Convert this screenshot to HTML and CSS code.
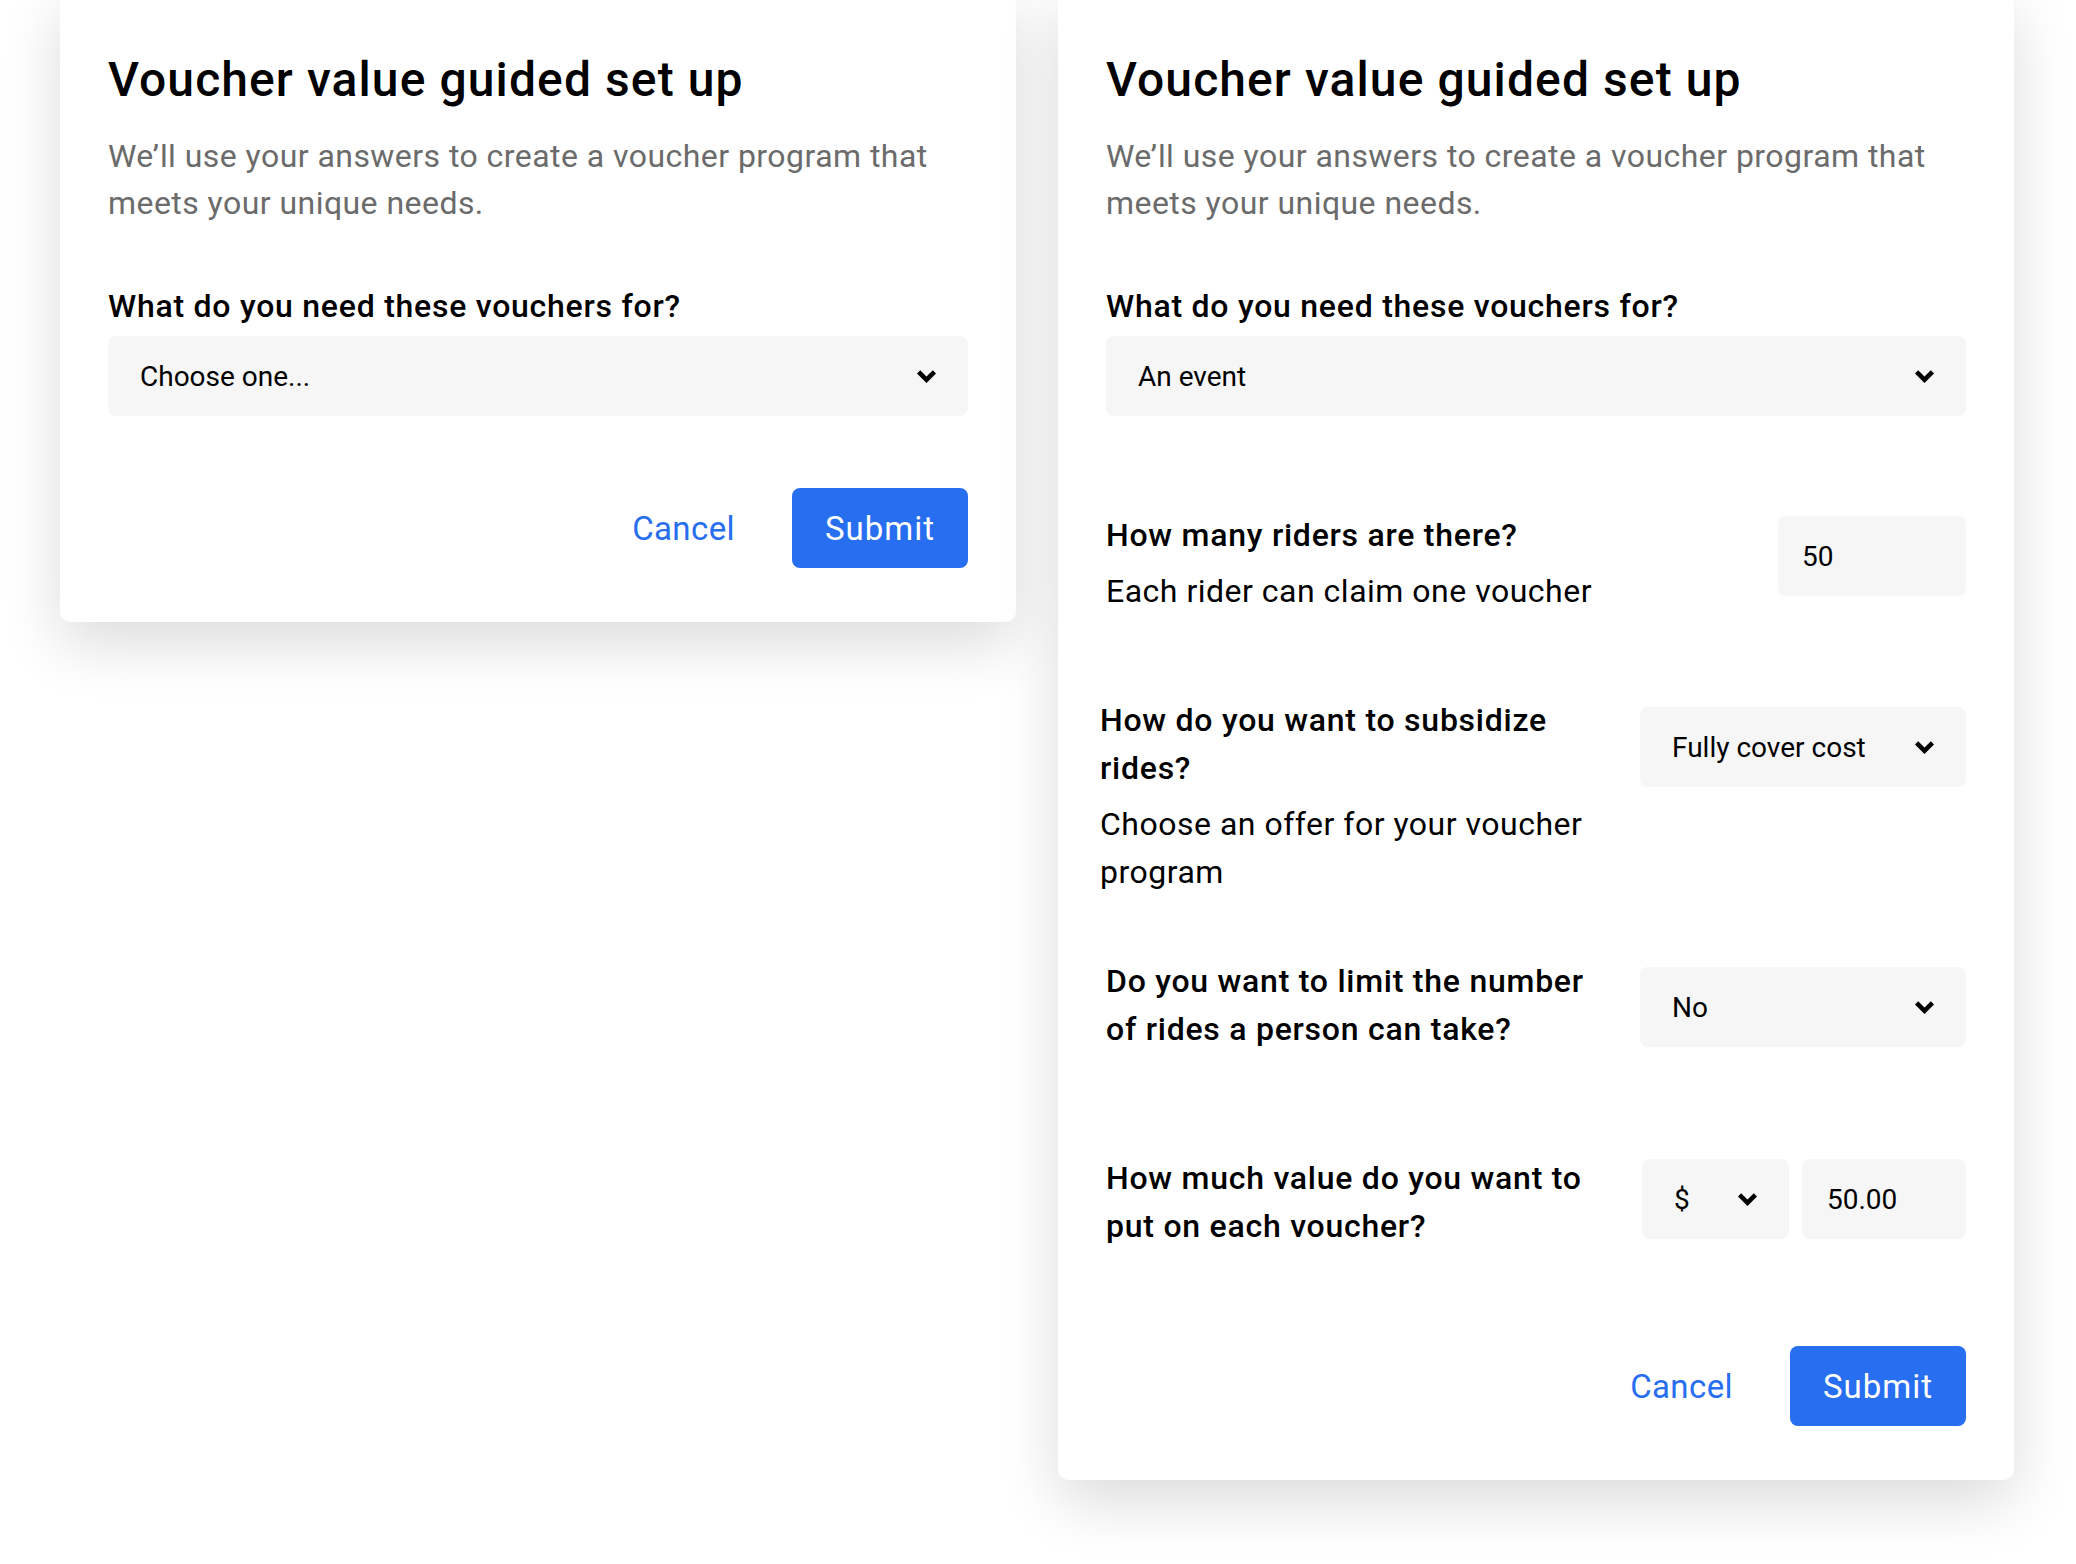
FILE: index.html
```html
<!DOCTYPE html>
<html lang="en">
<head>
<meta charset="utf-8">
<title>Voucher value guided set up</title>
<link rel="stylesheet" href="styles.css">
</head>
<body>
<div class="page">
  <section class="card">
    <h1 class="title">Voucher value guided set up</h1>
    <p class="subtitle">We’ll use your answers to create a voucher program that meets your unique needs.</p>
    <div class="q-label">What do you need these vouchers for?</div>
    <div class="field select">
      <span>Choose one...</span>
      <svg class="chev" width="19" height="13" viewBox="0 0 19 13"><polygon points="0,3.4 3.2,0.2 9.5,6.5 15.8,0.2 19,3.4 9.5,12.9"/></svg>
    </div>
    <div class="actions">
      <button class="btn-cancel">Cancel</button>
      <button class="btn-submit">Submit</button>
    </div>
  </section>

  <section class="card">
    <h1 class="title">Voucher value guided set up</h1>
    <p class="subtitle">We’ll use your answers to create a voucher program that meets your unique needs.</p>
    <div class="q-label">What do you need these vouchers for?</div>
    <div class="field select">
      <span>An event</span>
      <svg class="chev" width="19" height="13" viewBox="0 0 19 13"><polygon points="0,3.4 3.2,0.2 9.5,6.5 15.8,0.2 19,3.4 9.5,12.9"/></svg>
    </div>

    <div class="row row-1">
      <div class="q-text">
        <div class="q-title">How many riders are there?</div>
        <div class="q-desc">Each rider can claim one voucher</div>
      </div>
      <div class="field input riders">50</div>
    </div>

    <div class="row row-2">
      <div class="q-text">
        <div class="q-title">How do you want to subsidize rides?</div>
        <div class="q-desc">Choose an offer for your voucher program</div>
      </div>
      <div class="field select wide">
        <span>Fully cover cost</span>
        <svg class="chev" width="19" height="13" viewBox="0 0 19 13"><polygon points="0,3.4 3.2,0.2 9.5,6.5 15.8,0.2 19,3.4 9.5,12.9"/></svg>
      </div>
    </div>

    <div class="row row-3">
      <div class="q-text">
        <div class="q-title">Do you want to limit the number of rides a person can take?</div>
      </div>
      <div class="field select wide">
        <span>No</span>
        <svg class="chev" width="19" height="13" viewBox="0 0 19 13"><polygon points="0,3.4 3.2,0.2 9.5,6.5 15.8,0.2 19,3.4 9.5,12.9"/></svg>
      </div>
    </div>

    <div class="row row-4">
      <div class="q-text">
        <div class="q-title">How much value do you want to put on each voucher?</div>
      </div>
      <div class="amount-group">
        <div class="field select currency">
          <span>$</span>
          <svg class="chev" width="19" height="13" viewBox="0 0 19 13"><polygon points="0,3.4 3.2,0.2 9.5,6.5 15.8,0.2 19,3.4 9.5,12.9"/></svg>
        </div>
        <div class="field input amount">50.00</div>
      </div>
    </div>

    <div class="actions actions-long">
      <button class="btn-cancel">Cancel</button>
      <button class="btn-submit">Submit</button>
    </div>
  </section>
</div>
</body>
</html>
```

FILE: styles.css
```css
html, body {
  margin: 0;
  background: #ffffff;
}

body {
  font-family: Roboto, "Liberation Sans", Arial, sans-serif;
  color: #000000;
}

.page {
  display: flex;
  align-items: flex-start;
  gap: 42px;
  padding: 0 0 140px 60px;
  margin-top: -11px;
}

.card {
  width: 956px;
  box-sizing: border-box;
  padding: 63px 48px 54px;
  background: #ffffff;
  border-radius: 10px;
  box-shadow: 0 22px 60px rgba(0, 0, 0, 0.14);
}

.title {
  margin: 0;
  font-size: 48px;
  font-weight: 500;
  line-height: 56px;
  letter-spacing: 1.1px;
}

.subtitle {
  margin: 25px 0 0;
  font-size: 32px;
  line-height: 47px;
  letter-spacing: 0.45px;
  color: #6b6b6b;
}

.q-label {
  margin-top: 55px;
  font-size: 32px;
  font-weight: 500;
  line-height: 48px;
  letter-spacing: 0.75px;
}

.field {
  box-sizing: border-box;
  height: 80px;
  display: flex;
  align-items: center;
  background: #f6f6f6;
  border-radius: 8px;
  font-size: 28px;
  color: #000000;
}

.select {
  justify-content: space-between;
  padding: 0 32px;
  margin-top: 6px;
}

.chev {
  display: block;
  fill: #000000;
}

.input {
  padding: 0 24px;
}

.row {
  display: flex;
  justify-content: space-between;
  align-items: flex-start;
}

.row .select {
  margin-top: 0;
}

.q-text {
  width: 506px;
}

.q-title {
  font-size: 32px;
  font-weight: 500;
  line-height: 48px;
  letter-spacing: 0.75px;
}

.q-desc {
  margin-top: 8px;
  font-size: 32px;
  line-height: 48px;
  letter-spacing: 0.5px;
}

.row-1 { margin-top: 95px; }
.row-1 .riders { margin-top: 5px; width: 188px; }

.row-2 { margin-top: 81px; }
.row-2 .q-text { margin-left: -6px; }
.row-2 .field { margin-top: 11px; }

.row-3 { margin-top: 61px; }
.row-3 .field { margin-top: 10px; }

.row-4 { margin-top: 101px; }
.row-4 .amount-group { margin-top: 5px; }

.wide { width: 326px; }

.amount-group {
  display: flex;
  gap: 13px;
}

.currency { width: 147px; }
.amount { width: 164px; padding-left: 25px; }

.actions {
  display: flex;
  justify-content: flex-end;
  margin-top: 72px;
}

.actions-long { margin-top: 96px; }

.btn-cancel,
.btn-submit {
  height: 80px;
  border: none;
  border-radius: 8px;
  font-family: inherit;
  font-size: 33px;
  letter-spacing: 1px;
  cursor: pointer;
}

.btn-cancel {
  background: transparent;
  color: #276ef1;
  letter-spacing: 0.4px;
  padding: 0 24px;
  margin-right: 33px;
}

.btn-submit {
  width: 176px;
  background: #276ef1;
  color: #ffffff;
}
```
